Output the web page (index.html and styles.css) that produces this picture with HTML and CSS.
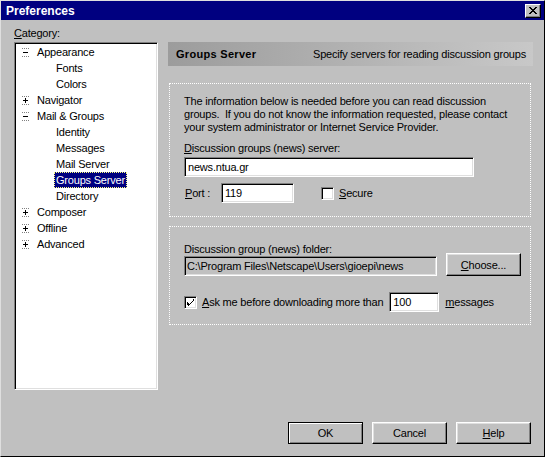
FILE: index.html
```html
<!DOCTYPE html>
<html>
<head>
<meta charset="utf-8">
<link rel="stylesheet" href="styles.css">
</head>
<body>
<div class="window">
  <div class="titlebar">
    <span class="title">Preferences</span>
    <div class="close-btn">
      <svg width="8" height="7" viewBox="0 0 8 7"><path d="M0 0h2v1h1v1h2V1h1V0h2v1H7v1H6v1H5v1h1v1h1v1h1v1H6V6H5V5H3v1H2v1H0V6h1V5h1V4h1V3H2V2H1V1H0z" fill="#000"/></svg>
    </div>
  </div>
  <div class="content">
    <div class="main">
      <div class="cat-label"><u>C</u>ategory:</div>
      <div class="tree">
        <div class="row l1"><span class="exp minus"></span><span class="lbl">Appearance</span></div>
        <div class="row l2"><span class="lbl">Fonts</span></div>
        <div class="row l2"><span class="lbl">Colors</span></div>
        <div class="row l1"><span class="exp plus"></span><span class="lbl">Navigator</span></div>
        <div class="row l1"><span class="exp minus"></span><span class="lbl">Mail &amp; Groups</span></div>
        <div class="row l2"><span class="lbl">Identity</span></div>
        <div class="row l2"><span class="lbl">Messages</span></div>
        <div class="row l2"><span class="lbl">Mail Server</span></div>
        <div class="row l2"><span class="lbl sel">Groups Server</span></div>
        <div class="row l2"><span class="lbl">Directory</span></div>
        <div class="row l1"><span class="exp plus"></span><span class="lbl">Composer</span></div>
        <div class="row l1"><span class="exp plus"></span><span class="lbl">Offline</span></div>
        <div class="row l1"><span class="exp plus"></span><span class="lbl">Advanced</span></div>
      </div>
      <div class="panel">
        <div class="header">
          <span class="h-title">Groups Server</span>
          <span class="h-desc">Specify servers for reading discussion groups</span>
        </div>
        <div class="group g1">
          <p class="info">The information below is needed before you can read discussion groups.&nbsp; If you do not know the information requested, please contact your system administrator or Internet Service Provider.</p>
          <div class="field-label"><u>D</u>iscussion groups (news) server:</div>
          <div class="input server">news.ntua.gr</div>
          <div class="port-row">
            <span class="port-label"><u>P</u>ort :</span>
            <div class="input port">119</div>
            <span class="check"></span>
            <span class="check-label"><u>S</u>ecure</span>
          </div>
        </div>
        <div class="group g2">
          <div class="field-label">Discussion group (news) folder:</div>
          <div class="path-row">
            <div class="input path">C:\Program Files\Netscape\Users\gioepi\news</div>
            <div class="btn choose"><u>C</u>hoose...</div>
          </div>
          <div class="ask-row">
            <span class="check checked"><svg width="7" height="7" viewBox="0 0 7 7"><path d="M6 0h1v2H6v1H5v1H4v1H3v1H2v1H1V6H0V3h1v1h1v1h1V4h1V3h1V2h1z" fill="#000"/></svg></span>
            <span class="check-label"><u>A</u>sk me before downloading more than</span>
            <div class="input count">100</div>
            <span class="msg-label"><u>m</u>essages</span>
          </div>
        </div>
      </div>
    </div>
    <div class="buttons">
      <div class="btn default">OK</div>
      <div class="btn">Cancel</div>
      <div class="btn"><u>H</u>elp</div>
    </div>
  </div>
</div>
</body>
</html>
```
FILE: styles.css
```css
html, body {
  margin: 0;
  padding: 0;
  background: #ffffff;
}
body {
  font-family: "Liberation Sans", Arial, sans-serif;
  font-size: 11px;
  color: #000;
  letter-spacing: -0.2px;
}
.window {
  width: 545px;
  height: 457px;
  box-sizing: border-box;
  background: #c0c0c0;
  border: 1px solid;
  border-color: #dfdfdf #000 #000 #dfdfdf;
  display: flex;
  flex-direction: column;
}
.titlebar {
  height: 19px;
  background: #000080;
  display: flex;
  align-items: center;
  justify-content: space-between;
  padding: 0 3px 0 5px;
}
.title {
  color: #fff;
  font-weight: bold;
  font-size: 12px;
  letter-spacing: 0;
}
.close-btn {
  width: 16px;
  height: 14px;
  box-sizing: border-box;
  background: #c0c0c0;
  border: 1px solid;
  border-color: #fff #000 #000 #fff;
  box-shadow: inset -1px -1px #808080;
  display: flex;
  align-items: center;
  justify-content: center;
}
.content {
  flex: 1;
  padding: 7px 11px 0 13px;
  display: flex;
  flex-direction: column;
}
.main {
  display: grid;
  grid-template-columns: 144px 365px;
  grid-template-rows: 15px 348px;
  column-gap: 10px;
}
.cat-label {
  grid-column: 1;
  grid-row: 1;
  line-height: 13px;
}
.tree {
  grid-column: 1;
  grid-row: 2;
  background: #fff;
  box-sizing: border-box;
  border: 1px solid;
  border-color: #808080 #fff #fff #808080;
  box-shadow: inset 1px 1px #000, inset -1px -1px #dfdfdf;
  padding: 1px;
}
.row {
  height: 16px;
  display: flex;
  align-items: center;
}
.row.l1 {
  padding-left: 6px;
}
.row.l2 {
  padding-left: 38px;
}
.exp {
  width: 7px;
  height: 9px;
  margin-right: 6px;
  position: relative;
  background-image: linear-gradient(to right, #808080 1px, transparent 1px);
  background-size: 2px 1px;
  background-repeat: repeat-x;
  background-position: 0 0;
}
.exp::before {
  content: "";
  position: absolute;
  left: 0;
  right: 0;
  bottom: 0;
  height: 1px;
  background-image: linear-gradient(to right, #808080 1px, transparent 1px);
  background-size: 2px 1px;
}
.exp::after {
  content: "";
  position: absolute;
  left: 1px;
  width: 5px;
  top: 4px;
  height: 1px;
  background: #000;
}
.exp.plus {
  background-image:
    linear-gradient(#000, #000),
    linear-gradient(to right, #808080 1px, transparent 1px);
  background-size: 1px 5px, 2px 1px;
  background-position: 3px 2px, 0 0;
  background-repeat: no-repeat, repeat-x;
}
.lbl {
  padding: 0 2px;
  line-height: 16px;
  height: 16px;
  white-space: nowrap;
}
.lbl.sel {
  background: #000080;
  color: #fff;
  outline: 1px dotted #ffff80;
  outline-offset: -1px;
}
.panel {
  grid-column: 2;
  grid-row: 2;
  display: flex;
  flex-direction: column;
}
.header {
  height: 24px;
  background: linear-gradient(to right, #9c9c9c, #c8c8c8);
  display: flex;
  align-items: center;
  padding-left: 8px;
  white-space: nowrap;
}
.h-title {
  font-weight: bold;
  letter-spacing: 0.3px;
  width: 137px;
}
.group {
  margin: 0 2px 0 1px;
  border: 1px dotted #fff;
  padding-left: 14px;
}
.g1 {
  margin-top: 17px;
  padding-top: 11px;
  padding-bottom: 13px;
}
.g2 {
  margin-top: 9px;
  padding-top: 16px;
  padding-bottom: 12px;
}
.info {
  margin: 0;
  line-height: 13px;
  width: 340px;
}
.field-label {
  line-height: 13px;
}
.g1 .field-label {
  margin-top: 8px;
}
.input {
  box-sizing: border-box;
  height: 20px;
  background: #fff;
  border: 1px solid;
  border-color: #808080 #fff #fff #808080;
  box-shadow: inset 1px 1px #000, inset -1px -1px #dfdfdf;
  padding: 0 3px;
  line-height: 18px;
  white-space: nowrap;
}
.server {
  width: 290px;
  margin-top: 2px;
}
.port-row {
  margin-top: 6px;
  display: flex;
  align-items: center;
}
.port-label {
  width: 37px;
  padding-left: 1px;
  box-sizing: border-box;
}
.port {
  width: 73px;
}
.check {
  width: 13px;
  height: 13px;
  box-sizing: border-box;
  background: #fff;
  border: 1px solid;
  border-color: #808080 #fff #fff #808080;
  box-shadow: inset 1px 1px #000, inset -1px -1px #dfdfdf;
  display: flex;
  align-items: center;
  justify-content: center;
}
.port-row .check {
  margin-left: 27px;
}
.check-label {
  margin-left: 5px;
  white-space: nowrap;
}
.path-row {
  display: flex;
  align-items: flex-end;
}
.path {
  width: 253px;
  background: #c0c0c0;
  padding-left: 2px;
}
.btn {
  width: 75px;
  height: 23px;
  box-sizing: border-box;
  background: #c0c0c0;
  border: 1px solid;
  border-color: #fff #000 #000 #fff;
  box-shadow: inset -1px -1px #808080, inset 1px 1px #dfdfdf;
  display: flex;
  align-items: center;
  justify-content: center;
}
.choose {
  margin-left: 9px;
  margin-top: -3px;
  height: 23px;
}
.ask-row {
  margin-top: 16px;
  display: flex;
  align-items: center;
}
.count {
  width: 50px;
  margin-left: 6px;
}
.msg-label {
  margin-left: 6px;
}
.buttons {
  margin-top: 32px;
  display: flex;
  justify-content: flex-end;
  gap: 9px;
  padding-right: 2px;
}
.buttons .btn {
  height: 22px;
}
.btn.default {
  border: 1px solid #000;
  box-shadow: inset 1px 1px #fff, inset -1px -1px #808080;
}
```
